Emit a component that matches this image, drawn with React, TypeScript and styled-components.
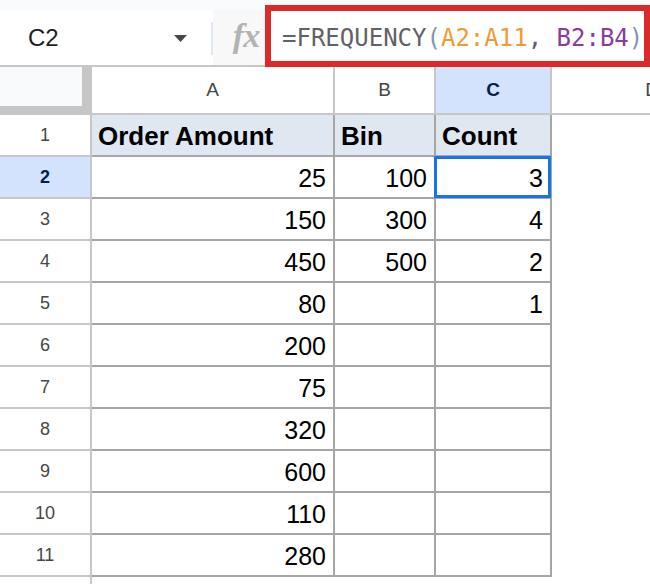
import React from "react";
import styled, { createGlobalStyle, css } from "styled-components";

const GlobalStyle = createGlobalStyle`
  html, body {
    margin: 0;
    padding: 0;
    background: #ffffff;
    overflow: hidden;
  }
  body {
    font-family: "Liberation Sans", Arial, sans-serif;
  }
`;

const Page = styled.div`
  width: 650px;
  height: 584px;
  overflow: hidden;
  background: #ffffff;
`;

// --------------------------- toolbar //
const TopBar = styled.div`
  display: flex;
  height: 65px;
  background: #f9fbfd;
  border-bottom: 2px solid #c7c7c7;
`;

const NameBox = styled.div`
  display: flex;
  align-items: center;
  width: 213px;
  margin-top: 10px;
  background: #ffffff;
  padding-left: 28px;
  box-sizing: border-box;
`;

const CellRef = styled.span`
  flex: 1;
  font-size: 24px;
  color: #1f1f1f;
  line-height: 1;
`;

const Caret = styled.svg`
  margin-right: 24px;
  margin-top: 2px;
`;

const NameDivider = styled.div`
  width: 2px;
  height: 33px;
  background: #dde7f6;
  align-self: center;
  margin-bottom: -2px;
`;

const FxArea = styled.div`
  display: flex;
  align-items: center;
  justify-content: center;
  width: 52px;
  margin-top: 10px;
  background: #f8f8f8;
`;

const FxGlyph = styled.span`
  font-family: "Liberation Serif", "DejaVu Serif", serif;
  font-style: italic;
  font-weight: bold;
  font-size: 34px;
  color: #b3b3b3;
  line-height: 1;
  margin-top: -4px;
  margin-left: 14px;
  letter-spacing: -1px;
`;

const FormulaBox = styled.div`
  flex: 1;
  display: flex;
  align-items: center;
  margin-top: 5px;
  margin-bottom: -2px;
  border: 6px solid #dc2a2a;
  background: #ffffff;
  padding-left: 11px;
  padding-top: 4px;
  font-family: "DejaVu Sans Mono", "Liberation Mono", monospace;
  font-size: 24px;
  white-space: pre;
  overflow: hidden;
`;

const Token = styled.span<{ $color: string }>`
  color: ${({ $color }) => $color};
`;

// --------------------------- grid //
const Sheet = styled.div`
  display: grid;
  grid-template-columns: 92px 243px 101px 116px 200px;
  grid-template-rows: 48px;
  grid-auto-rows: 42px;
`;

const Corner = styled.div`
  background: #f8f9fa;
  border-right: 10px solid #c6c6c6;
  border-bottom: 9px solid #c6c6c6;
`;

const ColHeader = styled.div<{ $active?: boolean; $last?: boolean }>`
  display: flex;
  align-items: center;
  justify-content: center;
  font-size: 19px;
  color: #444746;
  background: #ffffff;
  border-bottom: 2px solid #c7c7c7;
  border-right: ${({ $last }) => ($last ? "none" : "2px solid #c7c7c7")};
  ${({ $active }) =>
    $active &&
    css`
      background: #d3e3fd;
      color: #041e49;
      font-weight: bold;
    `}
`;

const RowHeader = styled.div<{ $active?: boolean }>`
  display: flex;
  align-items: center;
  justify-content: center;
  font-size: 18px;
  color: #444746;
  background: #ffffff;
  border-right: 2px solid #c7c7c7;
  border-bottom: 2px solid #c7c7c7;
  ${({ $active }) =>
    $active &&
    css`
      background: #d3e3fd;
      color: #041e49;
      font-weight: bold;
    `}
`;

const Cell = styled.div<{ $head?: boolean; $bordered?: boolean; $selected?: boolean }>`
  position: relative;
  display: flex;
  align-items: center;
  justify-content: flex-end;
  padding: 2px 7px 0;
  font-size: 25px;
  color: #000000;
  background: #ffffff;
  ${({ $bordered }) =>
    $bordered &&
    css`
      border-right: 2px solid #a6a6a6;
      border-bottom: 2px solid #a6a6a6;
    `}
  ${({ $head }) =>
    $head &&
    css`
      justify-content: flex-start;
      padding-left: 6px;
      font-weight: bold;
      font-size: 26px;
      background: #dfe7f1;
    `}
  ${({ $selected }) =>
    $selected &&
    css`
      &::after {
        content: "";
        position: absolute;
        top: -1px;
        left: -2px;
        right: -1px;
        bottom: -1px;
        border: 3px solid #1a73e8;
      }
    `}
`;

const columns = ["A", "B", "C", "D"];

const rows: (string | number | null)[][] = [
  ["Order Amount", "Bin", "Count"],
  [25, 100, 3],
  [150, 300, 4],
  [450, 500, 2],
  [80, null, 1],
  [200, null, null],
  [75, null, null],
  [320, null, null],
  [600, null, null],
  [110, null, null],
  [280, null, null],
];

const formula: [string, string][] = [
  ["=FREQUENCY", "#5f6368"],
  ["(", "#7f98ad"],
  ["A2:A11", "#f09a36"],
  [", ", "#5f6368"],
  ["B2:B4", "#8a3b9e"],
  [")", "#7f98ad"],
];

export default function App() {
  return (
    <Page>
      <GlobalStyle />
      <TopBar>
        <NameBox>
          <CellRef>C2</CellRef>
          <Caret width="13" height="7" viewBox="0 0 13 7">
            <polygon points="0,0 13,0 6.5,7" fill="#444746" />
          </Caret>
          <NameDivider />
        </NameBox>
        <FxArea>
          <FxGlyph>fx</FxGlyph>
        </FxArea>
        <FormulaBox>
          {formula.map(([text, color], i) => (
            <Token key={i} $color={color}>
              {text}
            </Token>
          ))}
        </FormulaBox>
      </TopBar>

      <Sheet>
        <Corner />
        {columns.map((c, i) => (
          <ColHeader key={c} $active={c === "C"} $last={i === columns.length - 1}>
            {c}
          </ColHeader>
        ))}

        {rows.map((row, r) => (
          <React.Fragment key={r}>
            <RowHeader $active={r === 1}>{r + 1}</RowHeader>
            {row.map((value, c) => (
              <Cell key={c} $bordered $head={r === 0} $selected={r === 1 && c === 2}>
                {value}
              </Cell>
            ))}
            <Cell />
          </React.Fragment>
        ))}

        <RowHeader />
        <Cell />
        <Cell />
        <Cell />
        <Cell />
      </Sheet>
    </Page>
  );
}
